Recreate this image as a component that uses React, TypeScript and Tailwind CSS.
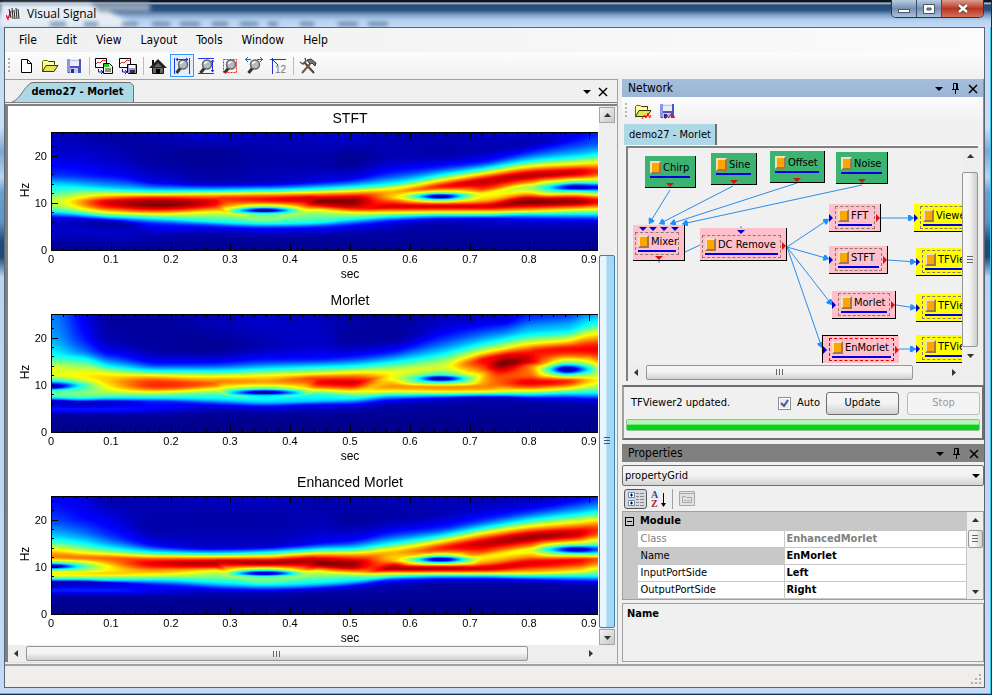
import { useLayoutEffect, useRef } from 'react';
import type { ReactNode } from 'react';

// One column of the time-frequency mesh: x in plot pixels, then matching lists of y and level.
type MeshColumn = [number, number[], number[]];

const PLOT_W = 547;
const PLOT_H = 118;

const clamp = (n: number) => Math.max(0, Math.min(1, n));

function jet(v: number): [number, number, number] {
  return [
    255 * clamp(1.5 - Math.abs(4 * v - 3)),
    255 * clamp(1.5 - Math.abs(4 * v - 2)),
    255 * clamp(1.5 - Math.abs(4 * v - 1)),
  ];
}

// Cubic interpolation with limited slopes, so that no overshoot appears between samples.
function sample(xs: number[], ys: number[], x: number) {
  const last = xs.length - 1;
  let i = 0;
  while (i < last - 1 && x > xs[i + 1]) i++;
  const secant = (k: number) => (ys[k + 1] - ys[k]) / (xs[k + 1] - xs[k]);
  const slope = (k: number) => {
    if (k === 0 || k === last) return 0;
    const a = secant(k - 1);
    const b = secant(k);
    return a * b <= 0 ? 0 : (2 * a * b) / (a + b);
  };
  const h = xs[i + 1] - xs[i];
  const t = clamp((x - xs[i]) / h);
  const t2 = t * t;
  const t3 = t2 * t;
  return (
    (2 * t3 - 3 * t2 + 1) * ys[i] +
    (t3 - 2 * t2 + t) * h * slope(i) +
    (3 * t2 - 2 * t3) * ys[i + 1] +
    (t3 - t2) * h * slope(i + 1)
  );
}

// Adds a column at the rim of an interference gap: outer rows follow the mesh, rows 6-8 are given.
type Rim = [number, number[], number[]];

function addRims(mesh: MeshColumn[], rims: Rim[]): MeshColumn[] {
  const xs = mesh.map((c) => c[0]);
  const extra = rims.map(([x, ry, rv]): MeshColumn => {
    const y = mesh[0][1].map((_, i) => sample(xs, mesh.map((c) => c[1][i]), x));
    const v = mesh[0][2].map((_, i) => sample(xs, mesh.map((c) => c[2][i]), x));
    y.splice(6, 3, ...ry);
    v.splice(6, 3, ...rv);
    for (let i = 9; i < y.length - 1; i++) y[i] = Math.max(y[i], y[i - 1] + 1);
    return [x, y, v];
  });
  return [...mesh, ...extra].sort((a, b) => a[0] - b[0]);
}

const stftMesh = addRims([
  [0, [0, 20, 42, 52, 60, 65, 68, 70, 73, 76, 78, 81, 85, 90, 97, 118], [0.06, 0.08, 0.17, 0.34, 0.45, 0.53, 0.56, 0.57, 0.54, 0.48, 0.42, 0.3, 0.13, 0.07, 0.07, 0.02]],
  [60, [0, 15, 40, 55, 62, 66, 69, 71, 74, 77, 80, 84, 88, 91, 99, 118], [0.03, 0.05, 0.11, 0.32, 0.62, 0.8, 0.91, 0.92, 0.87, 0.76, 0.62, 0.38, 0.12, 0.03, 0.07, 0.02]],
  [107, [0, 23, 48, 58, 62, 66, 69, 72, 75, 78, 81, 86, 92, 97, 103, 118], [0.05, 0.03, 0.09, 0.36, 0.63, 0.88, 0.97, 1, 0.94, 0.82, 0.65, 0.38, 0.15, 0.1, 0.05, 0.02]],
  [162, [0, 23, 49, 58, 61, 66, 69, 71, 74, 77, 80, 89, 94, 98, 105, 118], [0.08, 0.02, 0.05, 0.36, 0.6, 0.83, 0.9, 0.89, 0.84, 0.72, 0.6, 0.38, 0.15, 0.08, 0.03, 0.02]],
  [213, [0, 25, 49, 58, 61, 67, 74, 78, 81, 84, 87, 91, 96, 100, 106, 118], [0.06, 0.04, 0.06, 0.4, 0.65, 0.87, 0.5, 0.02, 0.4, 0.49, 0.5, 0.38, 0.14, 0.08, 0.03, 0.02]],
  [269, [0, 27, 47, 56, 60, 66, 69, 71, 74, 77, 80, 89, 95, 99, 105, 118], [0.07, 0.04, 0.09, 0.38, 0.65, 0.93, 1, 0.95, 0.83, 0.65, 0.54, 0.4, 0.14, 0.08, 0.03, 0.02]],
  [299, [0, 27, 45, 54, 59, 65, 68, 71, 74, 77, 80, 87, 93, 98, 105, 118], [0.08, 0.02, 0.1, 0.36, 0.64, 0.92, 0.99, 0.98, 0.92, 0.8, 0.62, 0.37, 0.14, 0.07, 0.03, 0.02]],
  [341, [0, 22, 38, 51, 56, 60, 63, 65, 69, 74, 79, 84, 89, 95, 104, 118], [0.05, 0.05, 0.13, 0.38, 0.62, 0.7, 0.68, 0.68, 0.8, 0.91, 0.68, 0.38, 0.14, 0.06, 0.03, 0.02]],
  [389, [0, 20, 33, 42, 48, 54, 60, 64, 68, 74, 79, 83, 87, 92, 102, 118], [0.05, 0.04, 0.13, 0.36, 0.63, 0.85, 0.5, 0.02, 0.5, 0.91, 0.66, 0.36, 0.11, 0.04, 0.03, 0.02]],
  [432, [0, 15, 28, 36, 41, 49, 56, 62, 67, 74, 79, 83, 87, 92, 102, 118], [0.07, 0.05, 0.13, 0.37, 0.63, 0.93, 0.82, 0.62, 0.68, 0.91, 0.66, 0.36, 0.09, 0.06, 0.03, 0.02]],
  [478, [0, 10, 18, 28, 34, 43, 50, 55, 60, 69, 78, 82, 87, 92, 102, 118], [0.08, 0.05, 0.13, 0.36, 0.63, 0.94, 0.73, 0.53, 0.65, 1, 0.67, 0.36, 0.13, 0.06, 0.03, 0.02]],
  [526, [0, 6, 12, 23, 31, 40, 49, 55, 59, 69, 77, 82, 87, 92, 102, 118], [0.1, 0.13, 0.18, 0.35, 0.62, 0.92, 0.5, 0.04, 0.45, 0.97, 0.63, 0.36, 0.14, 0.06, 0.03, 0.02]],
  [547, [0, 6, 12, 21, 30, 39, 49, 55, 59, 69, 77, 82, 87, 92, 102, 118], [0.15, 0.18, 0.22, 0.36, 0.62, 0.84, 0.5, 0.12, 0.4, 0.89, 0.6, 0.36, 0.15, 0.06, 0.03, 0.02]],
], [
  [183, [74, 78, 80], [0.66, 0.45, 0.47]],
  [243, [74, 78, 80], [0.66, 0.45, 0.47]],
  [362, [60, 64, 68], [0.64, 0.45, 0.64]],
  [416, [59, 63, 68], [0.66, 0.46, 0.64]],
  [494, [50, 55, 60], [0.6, 0.4, 0.55]],
]);

const morletMesh = addRims([
  [0, [0, 21, 40, 48, 55, 60, 66, 72, 76, 79, 81, 84, 87, 95, 101, 118], [0.25, 0.28, 0.38, 0.5, 0.6, 0.6, 0.4, 0.02, 0.4, 0.48, 0.45, 0.3, 0.05, 0.14, 0.03, 0.01]],
  [30, [0, 21, 36, 45, 54, 61, 66, 71, 75, 79, 82, 85, 88, 95, 101, 118], [0.12, 0.15, 0.24, 0.4, 0.56, 0.63, 0.55, 0.4, 0.45, 0.5, 0.46, 0.3, 0.06, 0.14, 0.03, 0.01]],
  [60, [0, 21, 38, 51, 59, 64, 67, 71, 74, 78, 81, 84, 88, 95, 101, 118], [0.03, 0.04, 0.12, 0.35, 0.6, 0.68, 0.69, 0.66, 0.62, 0.54, 0.46, 0.32, 0.07, 0.14, 0.03, 0.01]],
  [107, [0, 32, 48, 56, 61, 65, 68, 71, 74, 77, 80, 84, 88, 94, 101, 118], [0.03, 0.03, 0.13, 0.37, 0.62, 0.77, 0.83, 0.84, 0.78, 0.64, 0.5, 0.33, 0.14, 0.12, 0.03, 0.01]],
  [162, [0, 33, 47, 56, 62, 67, 69, 71, 73, 76, 79, 85, 90, 95, 102, 118], [0.06, 0.02, 0.12, 0.36, 0.62, 0.75, 0.78, 0.75, 0.68, 0.57, 0.47, 0.34, 0.14, 0.06, 0.02, 0.01]],
  [213, [0, 30, 44, 54, 61, 67, 74, 78, 81, 83, 85, 88, 92, 97, 103, 118], [0.08, 0.05, 0.13, 0.36, 0.62, 0.72, 0.45, 0.02, 0.33, 0.38, 0.37, 0.31, 0.13, 0.05, 0.02, 0.01]],
  [269, [0, 27, 43, 52, 59, 64, 68, 71, 74, 77, 80, 86, 90, 96, 103, 118], [0.06, 0.07, 0.13, 0.36, 0.62, 0.82, 0.88, 0.83, 0.7, 0.53, 0.42, 0.33, 0.14, 0.05, 0.02, 0.01]],
  [299, [0, 25, 41, 51, 58, 64, 68, 72, 75, 78, 81, 85, 90, 96, 103, 118], [0.04, 0.03, 0.13, 0.36, 0.62, 0.83, 0.91, 0.84, 0.71, 0.57, 0.45, 0.34, 0.13, 0.04, 0.02, 0.01]],
  [341, [0, 22, 36, 47, 55, 59, 61, 64, 68, 72, 76, 81, 86, 92, 103, 118], [0.03, 0.03, 0.13, 0.36, 0.56, 0.62, 0.62, 0.61, 0.68, 0.73, 0.64, 0.36, 0.12, 0.04, 0.02, 0.01]],
  [389, [0, 12, 23, 38, 47, 53, 60, 64, 68, 73, 77, 81, 85, 92, 102, 118], [0.06, 0.08, 0.15, 0.34, 0.52, 0.58, 0.42, 0.02, 0.42, 0.73, 0.63, 0.32, 0.08, 0.03, 0.02, 0.01]],
  [432, [0, 6, 15, 28, 38, 46, 54, 61, 67, 72, 77, 80, 84, 90, 102, 118], [0.07, 0.09, 0.17, 0.36, 0.63, 0.87, 0.8, 0.68, 0.7, 0.74, 0.63, 0.35, 0.06, 0.03, 0.02, 0.01]],
  [452, [0, 6, 13, 24, 34, 42, 49, 56, 62, 68, 76, 80, 84, 90, 102, 118], [0.07, 0.1, 0.18, 0.36, 0.63, 0.91, 1, 0.89, 0.8, 0.8, 0.63, 0.35, 0.06, 0.03, 0.02, 0.01]],
  [478, [0, 5, 11, 19, 29, 38, 46, 53, 60, 68, 76, 80, 85, 90, 102, 118], [0.16, 0.19, 0.26, 0.36, 0.62, 0.86, 0.92, 0.75, 0.77, 0.89, 0.62, 0.36, 0.08, 0.03, 0.02, 0.01]],
  [516, [0, 4, 9, 16, 26, 35, 48, 55, 61, 67, 74, 79, 85, 90, 102, 118], [0.18, 0.22, 0.28, 0.36, 0.63, 0.87, 0.5, 0.02, 0.48, 0.84, 0.62, 0.36, 0.1, 0.04, 0.02, 0.01]],
  [547, [0, 2, 4, 8, 19, 35, 49, 55, 60, 66, 72, 79, 86, 91, 102, 118], [0.3, 0.32, 0.34, 0.38, 0.62, 0.88, 0.66, 0.52, 0.57, 0.64, 0.55, 0.35, 0.1, 0.04, 0.02, 0.01]],
], [
  [181, [74, 78, 80], [0.54, 0.34, 0.37]],
  [246, [74, 78, 80], [0.58, 0.35, 0.37]],
  [362, [60, 64, 68], [0.53, 0.44, 0.52]],
  [416, [60, 64, 68], [0.58, 0.44, 0.54]],
  [494, [48, 55, 60], [0.72, 0.48, 0.6]],
  [537, [48, 55, 60], [0.58, 0.36, 0.5]],
]);

const enhancedMesh = addRims([
  [0, [0, 22, 36, 43, 53, 60, 66, 70, 73, 77, 80, 83, 86, 94, 100, 118], [0.12, 0.18, 0.29, 0.38, 0.62, 0.75, 0.45, 0.02, 0.42, 0.64, 0.56, 0.34, 0.05, 0.15, 0.03, 0.01]],
  [30, [0, 20, 34, 46, 56, 61, 66, 70, 73, 77, 80, 83, 86, 94, 100, 118], [0.1, 0.13, 0.22, 0.37, 0.62, 0.76, 0.56, 0.42, 0.5, 0.65, 0.55, 0.34, 0.06, 0.15, 0.03, 0.01]],
  [60, [0, 20, 38, 51, 58, 62, 66, 71, 73, 77, 80, 84, 87, 94, 100, 118], [0.04, 0.09, 0.16, 0.36, 0.64, 0.78, 0.73, 0.64, 0.64, 0.67, 0.55, 0.33, 0.08, 0.15, 0.03, 0.01]],
  [107, [0, 30, 48, 56, 60, 64, 67, 70, 73, 77, 80, 84, 89, 95, 101, 118], [0.05, 0.04, 0.11, 0.38, 0.65, 0.85, 0.91, 0.86, 0.75, 0.65, 0.53, 0.34, 0.14, 0.1, 0.03, 0.01]],
  [162, [0, 22, 50, 57, 60, 65, 67, 70, 73, 76, 80, 87, 92, 97, 103, 118], [0.06, 0.04, 0.07, 0.37, 0.62, 0.92, 0.95, 0.88, 0.68, 0.57, 0.5, 0.33, 0.14, 0.05, 0.02, 0.01]],
  [213, [0, 22, 49, 56, 60, 66, 73, 77, 80, 82, 85, 89, 94, 98, 105, 118], [0.07, 0.04, 0.07, 0.38, 0.65, 0.96, 0.5, 0.02, 0.42, 0.49, 0.47, 0.34, 0.12, 0.04, 0.02, 0.01]],
  [269, [0, 22, 45, 53, 57, 64, 67, 70, 74, 77, 80, 87, 92, 96, 103, 118], [0.04, 0.05, 0.11, 0.38, 0.65, 0.95, 1, 0.9, 0.66, 0.55, 0.49, 0.34, 0.12, 0.04, 0.02, 0.01]],
  [299, [0, 22, 43, 52, 57, 63, 67, 71, 74, 77, 80, 85, 90, 95, 103, 118], [0.05, 0.03, 0.12, 0.37, 0.65, 0.88, 0.98, 0.93, 0.78, 0.61, 0.47, 0.33, 0.12, 0.04, 0.02, 0.01]],
  [341, [0, 20, 34, 46, 53, 57, 61, 64, 68, 72, 76, 80, 84, 90, 103, 118], [0.05, 0.04, 0.12, 0.36, 0.63, 0.7, 0.68, 0.7, 0.86, 0.96, 0.7, 0.42, 0.15, 0.05, 0.02, 0.01]],
  [389, [0, 15, 30, 39, 45, 52, 59, 63, 67, 72, 76, 79, 83, 89, 103, 118], [0.06, 0.05, 0.14, 0.36, 0.63, 0.84, 0.5, 0.02, 0.52, 0.95, 0.69, 0.4, 0.12, 0.03, 0.02, 0.01]],
  [432, [0, 10, 22, 31, 37, 47, 55, 61, 66, 72, 76, 79, 83, 89, 103, 118], [0.05, 0.07, 0.15, 0.37, 0.64, 0.93, 0.8, 0.64, 0.72, 0.92, 0.69, 0.4, 0.11, 0.03, 0.02, 0.01]],
  [478, [0, 7, 14, 23, 30, 41, 49, 54, 59, 67, 76, 80, 84, 89, 103, 118], [0.06, 0.08, 0.15, 0.36, 0.63, 0.97, 0.76, 0.6, 0.7, 0.9, 0.65, 0.36, 0.11, 0.03, 0.02, 0.01]],
  [526, [0, 4, 9, 17, 26, 37, 48, 53, 58, 64, 74, 80, 85, 90, 103, 118], [0.1, 0.13, 0.2, 0.36, 0.64, 0.92, 0.5, 0.03, 0.5, 0.87, 0.65, 0.36, 0.12, 0.04, 0.02, 0.01]],
  [547, [0, 3, 8, 15, 24, 34, 47, 53, 58, 63, 73, 80, 85, 90, 103, 118], [0.14, 0.17, 0.24, 0.37, 0.64, 0.83, 0.5, 0.2, 0.48, 0.8, 0.58, 0.36, 0.14, 0.04, 0.02, 0.01]],
], [
  [181, [73, 77, 79], [0.64, 0.45, 0.48]],
  [246, [73, 77, 79], [0.68, 0.45, 0.48]],
  [362, [59, 63, 67], [0.66, 0.46, 0.64]],
  [418, [59, 63, 67], [0.68, 0.48, 0.64]],
  [494, [48, 53, 58], [0.64, 0.42, 0.6]],
]);

function Spectrogram({ mesh, label }: { mesh: MeshColumn[]; label: string }) {
  const ref = useRef<HTMLCanvasElement>(null);

  useLayoutEffect(() => {
    const ctx = ref.current?.getContext('2d');
    if (!ctx) return;
    const image = ctx.createImageData(PLOT_W, PLOT_H);
    const xs = mesh.map((c) => c[0]);
    const rows = mesh[0][1].map((_, i) => ({ y: mesh.map((c) => c[1][i]), v: mesh.map((c) => c[2][i]) }));
    for (let x = 0; x < PLOT_W; x++) {
      const ys = rows.map((r) => sample(xs, r.y, x));
      const vs = rows.map((r) => sample(xs, r.v, x));
      for (let y = 0; y < PLOT_H; y++) {
        const [r, g, b] = jet(sample(ys, vs, y));
        image.data.set([r, g, b, 255], (y * PLOT_W + x) * 4);
      }
    }
    ctx.putImageData(image, 0, 0);
  }, [mesh]);

  return <canvas ref={ref} width={PLOT_W} height={PLOT_H} aria-label={label} className="absolute left-[43px] top-[26px]" />;
}

const X0 = 43;
const Y0 = 144;

function Chart({ title, mesh }: { title: string; mesh: MeshColumn[] }) {
  const minorX = Array.from({ length: 46 }, (_, i) => i);
  const minorY = Array.from({ length: 13 }, (_, i) => i);
  return (
    <div className="relative h-[182px] w-[591px] shrink-0 bg-white">
      <Spectrogram mesh={mesh} label={title} />
      <svg width="591" height="182" className="absolute inset-0 font-['Liberation_Sans',sans-serif]" fontSize="11">
        <path d="M43.5 144V26.5H590M43 144.5H590" fill="none" stroke="#000" />
        {minorX.map((i) => {
          const x = Math.round(X0 + i * 11.96) + 0.5;
          const len = i % 5 === 0 ? 7 : 3;
          return <path key={i} d={`M${x} 26v${len}M${x} 144v-${len}`} stroke="#000" />;
        })}
        {minorY.map((i) => {
          const y = Math.round(Y0 - i * 9.44) + 0.5;
          return <path key={i} d={`M43 ${y}h${i % 5 === 0 ? 7 : 3}`} stroke="#000" />;
        })}
        <text x="342" y="17" fontSize="14" textAnchor="middle">{title}</text>
        {[0, 10, 20].map((hz) => (
          <text key={hz} x="39" y={148 - Math.round(hz * 4.72)} textAnchor="end">{hz}</text>
        ))}
        {[0, 1, 2, 3, 4, 5, 6, 7, 8, 9].map((n) => (
          <text key={n} x={Math.round(43 + n * 59.8)} y="157" textAnchor="middle">{n === 0 ? '0' : `0.${n}`}</text>
        ))}
        <text x="342" y="172" fontSize="12" textAnchor="middle">sec</text>
        <text transform="translate(21 84) rotate(-90)" fontSize="12" textAnchor="middle">Hz</text>
      </svg>
    </div>
  );
}

/* ---------- icons ---------- */

function Icon({ children, size = 18 }: { children: ReactNode; size?: number }) {
  return (
    <svg width={size} height={size} viewBox="0 0 18 18" fill="none" aria-hidden="true">
      {children}
    </svg>
  );
}

const NewIcon = () => (
  <Icon>
    <path d="M4.500 2.500h6l4 4v9h-10z" fill="#fff" stroke="#000" />
    <path d="M10.500 2.500v4h4" stroke="#000" />
  </Icon>
);

const OpenIcon = ({ marked = false }: { marked?: boolean }) => (
  <Icon>
    <path d="M1.500 14.500v-10l1-1h4l1 1h6v3" fill="#ffffa0" stroke="#6b6b00" />
    <path d="M1.500 14.500l3.500-6h12l-4 6z" fill="#e4e45c" stroke="#3a3a00" />
    <path d="M7.500 4.500h6v3" stroke="#3a3a00" />
    {marked && <path d="M8 17l2.500-4 1.500 3 2-5 1.500 5 1.500-3" stroke="#f00" />}
  </Icon>
);

const SaveIcon = ({ marked = false }: { marked?: boolean }) => (
  <Icon>
    <path d="M2 2h14v14H3l-1-1z" fill="#4a55bd" />
    <path d="M2 2h3v13H2z" fill="#8b96e6" />
    <path d="M5 2h9v7H5z" fill="#e9edf8" />
    <path d="M5 3h9v1H5z" fill="#b9c4e2" />
    <path d="M5 11h8v5H5z" fill="#c3cbe6" />
    <path d="M6 12h3v4H6z" fill="#26307e" />
    {marked && <path d="M7 17l2-4 1.500 3 2-4 1.500 4 1-3 2 3" stroke="#c01840" />}
  </Icon>
);

const GraphMini = () => (
  <>
    <path d="M.5 1.500h11v9H.5z" fill="#fff" stroke="#000" />
    <path d="M1 7l2-2 2 1 3-3 3 1" stroke="#e02020" />
    <path d="M3.500 12v3h4M6 13l2 2-2 2" stroke="#1414b8" />
  </>
);

const GraphSheetIcon = () => (
  <Icon>
    <GraphMini />
    <path d="M8.500 6.500h6l3 3v7h-9z" fill="#e8f4e0" stroke="#000" />
    <path d="M9 7h5v3H9z" fill="#22cc22" />
    <path d="M10 12h6M10 14h6" stroke="#333" />
  </Icon>
);

const GraphSaveIcon = () => (
  <Icon>
    <GraphMini />
    <path d="M8.500 7.500h9v9h-8l-1-1z" fill="#9a9fd8" stroke="#000" />
    <path d="M10 8h6v3h-6z" fill="#fff" />
    <path d="M11 13h5v3h-5z" fill="#333" />
  </Icon>
);

const HomeIcon = () => (
  <Icon>
    <path d="M3 3h2v5H3z" fill="#111" />
    <path d="M3.500 9.500h11v7h-11z" fill="#666" stroke="#111" />
    <path d="M0 11L9 2l9 9z" fill="#222" />
    <path d="M5 10l4-4 4 4z" fill="#666" />
    <path d="M7 12h4v5H7z" fill="#000" />
  </Icon>
);

const Magnifier = () => (
  <>
    <path d="M7.500 11l-4 5" stroke="#333" strokeWidth="3" />
    <circle cx="10" cy="7.500" r="4.500" fill="#b4bcc2" stroke="#666" strokeWidth="1.500" />
    <path d="M7.500 7a2.500 2.500 0 0 1 3-2" stroke="#fff" strokeWidth="1.500" />
  </>
);

const ZoomXIcon = () => (
  <Icon>
    <Magnifier />
    <path d="M1.500 1v16M16.500 1v16M3 2.500h12M5 1L3 2.500 5 4M13 1l2 1.500L13 4" stroke="#1f36e8" />
  </Icon>
);

const ZoomYIcon = () => (
  <Icon>
    <Magnifier />
    <path d="M1 1.500h16M1 16.500h16M15.500 3v12M14 5l1.500-2L17 5M14 13l1.500 2 1.500-2" stroke="#1f36e8" />
  </Icon>
);

const ZoomBoxIcon = () => (
  <Icon>
    <Magnifier />
    <path d="M2.500 2.500h13v13h-13z" stroke="#f02020" strokeDasharray="2 1" />
  </Icon>
);

const PanIcon = () => (
  <Icon>
    <Magnifier />
    <path d="M0 2.500h6M12 2.500h6M3 0L.5 2.500 3 5M15 0l2.500 2.500L15 5" stroke="#1f56e8" />
  </Icon>
);

const AxisIcon = () => (
  <Icon>
    <path d="M1 2.500h16M3.500 1v16M4 3l5 5" stroke="#2030d8" />
    <text x="6" y="16" fontSize="10" fill="#777" className="font-['Liberation_Sans',sans-serif]">12</text>
  </Icon>
);

const ToolsIcon = () => (
  <Icon>
    <path d="M5 5l10 11" stroke="#444" strokeWidth="2" />
    <path d="M1 5l3 2 3-3-1-3" stroke="#555" strokeWidth="1.500" />
    <path d="M3 16l8-9" stroke="#7b5a28" strokeWidth="2" />
    <path d="M8 3l4-1 5 4-1 3-3-3-2 1z" fill="#777" stroke="#333" />
  </Icon>
);

const PinIcon = () => (
  <svg width="9" height="11" fill="none" stroke="#000" aria-hidden="true">
    <path d="M2.500 6V.5h4V6M5.500 1v5M1 6.500h7M4.500 7v4" />
  </svg>
);

const CrossIcon = () => (
  <svg width="10" height="10" fill="none" stroke="#000" strokeWidth="1.500" aria-hidden="true">
    <path d="M1 1l8 8M9 1L1 9" />
  </svg>
);

const CaretIcon = () => (
  <svg width="8" height="4" aria-hidden="true">
    <path d="M0 0h8L4 4z" />
  </svg>
);

/* ---------- window chrome ---------- */

function TitleBar() {
  return (
    <header className="relative flex h-[27px] shrink-0 justify-between overflow-hidden bg-[linear-gradient(180deg,#0b1420_0,#0b1420_2px,#c5d6e6_3px,#264a76_5px,#2c5280_10px,#7fa1c9_15px,#b4d0ef_20px,#c3dbf6_27px)]">
      <svg width="420" height="27" className="absolute left-0 top-0 blur-[2px]" aria-hidden="true">
        <path d="M0 3h90l50 24H0z" fill="#e6edf4" />
        <path d="M90 3h60v9H100z" fill="#8fa3b8" />
        <path d="M50 24h16M84 24h14M122 24h16M152 24h18M180 24h20M212 24h16M240 24h18M268 24h10M300 24h14M338 24h20M368 24h20" stroke="#4b6d96" strokeWidth="3" />
      </svg>
      <div className="relative flex items-center gap-[7px] pl-[6px] font-['Open_Sans',sans-serif] text-[12px]">
        <svg width="14" height="14" fill="none" aria-hidden="true">
          <path d="M0 8l2 4 3-8" stroke="#e01830" strokeWidth="1.500" />
          <path d="M3 2l2 9M6 1l1 11M8 3l1 9M10 1l1 11M12 2l1 10" stroke="#222" />
        </svg>
        <span>Visual Signal</span>
      </div>
      <div className="relative mr-[7px] flex h-[18px] overflow-hidden rounded-b-[5px] border border-t-0 border-[#26384f]">
        <button aria-label="Minimize" className="flex w-[25px] items-end justify-center border-r border-[#3b4f69] bg-linear-to-b from-[#b9cde2] via-[#7590af] to-[#a9c2dd] pb-[4px]">
          <span className="h-[4px] w-[12px] border border-[#4a5668] bg-white" />
        </button>
        <button aria-label="Maximize" className="flex w-[25px] items-center justify-center border-r border-[#3b4f69] bg-linear-to-b from-[#b9cde2] via-[#7590af] to-[#a9c2dd]">
          <svg width="12" height="10" fill="none" aria-hidden="true">
            <path d="M2.500 2.500h7v5h-7z" stroke="#fff" strokeWidth="3" />
            <path d="M.5.5h11v9H.5zM4 4h4v2H4z" stroke="#4a5668" />
          </svg>
        </button>
        <button aria-label="Close" className="flex w-[41px] items-center justify-center bg-linear-to-b from-[#dc9c90] via-[#b83420] to-[#d4705c]">
          <svg width="12" height="11" fill="none" aria-hidden="true">
            <path d="M2 2l8 7M10 2L2 9" stroke="#5b2a28" strokeWidth="4" />
            <path d="M2 2l8 7M10 2L2 9" stroke="#fff" strokeWidth="2.500" />
          </svg>
        </button>
      </div>
    </header>
  );
}

const menus = ['File', 'Edit', 'View', 'Layout', 'Tools', 'Window', 'Help'];

function MenuBar() {
  return (
    <nav className="flex h-[24px] shrink-0 items-center bg-linear-to-r from-[#f0f0f0] to-[#fbfbfb] pl-[4px]">
      {menus.map((name) => (
        <button key={name} className="pl-[10px] pr-[9px] text-[12px] leading-[20px]">{name}</button>
      ))}
    </nav>
  );
}

const Grip = () => <span className="h-[16px] w-[2px] shrink-0 bg-[repeating-linear-gradient(180deg,#b4b4b4_0,#b4b4b4_2px,transparent_2px,transparent_4px)]" />;
const Separator = () => <span className="ml-[3px] mr-[2px] h-[18px] w-px shrink-0 bg-[#bdbdbd]" />;

function ToolButton({ label, active = false, children }: { label: string; active?: boolean; children: ReactNode }) {
  return (
    <button
      aria-label={label}
      className={`flex h-[23px] w-[24px] shrink-0 items-center justify-center border ${active ? 'border-[#3399ff] bg-[#e4eefa]' : 'border-transparent'}`}
    >
      {children}
    </button>
  );
}

function Toolbar() {
  return (
    <div className="flex h-[27px] shrink-0 items-center bg-linear-to-b from-[#fdfdfd] to-[#f0f0f0] pl-[3px]">
      <Grip />
      <span className="w-[4px]" />
      <ToolButton label="New"><NewIcon /></ToolButton>
      <ToolButton label="Open"><OpenIcon /></ToolButton>
      <ToolButton label="Save"><SaveIcon /></ToolButton>
      <Separator />
      <ToolButton label="Copy chart"><GraphSheetIcon /></ToolButton>
      <ToolButton label="Save chart"><GraphSaveIcon /></ToolButton>
      <Separator />
      <ToolButton label="Home"><HomeIcon /></ToolButton>
      <ToolButton label="Zoom X" active><ZoomXIcon /></ToolButton>
      <ToolButton label="Zoom Y"><ZoomYIcon /></ToolButton>
      <ToolButton label="Zoom box"><ZoomBoxIcon /></ToolButton>
      <ToolButton label="Pan"><PanIcon /></ToolButton>
      <ToolButton label="Axis values"><AxisIcon /></ToolButton>
      <Separator />
      <ToolButton label="Preferences"><ToolsIcon /></ToolButton>
    </div>
  );
}

/* ---------- scroll bars ---------- */

const arrowPaths = {
  up: 'M0 5h7L3.500 1z',
  down: 'M0 2h7L3.500 6z',
  left: 'M5 0v7L1 3.500z',
  right: 'M2 0v7l4-3.500z',
};

function ArrowButton({ dir, framed = false }: { dir: keyof typeof arrowPaths; framed?: boolean }) {
  return (
    <button
      aria-label={`Scroll ${dir}`}
      className={`flex size-[16px] shrink-0 items-center justify-center ${framed ? 'border border-[#a5a5a5] bg-linear-to-br from-[#f4f4f4] to-[#c9c9c9]' : ''}`}
    >
      <svg width="7" height="7" fill="#333"><path d={arrowPaths[dir]} /></svg>
    </button>
  );
}

const Ridges = ({ vertical = false, color = '#666' }: { vertical?: boolean; color?: string }) => (
  <svg width="8" height="8" stroke={color} aria-hidden="true">
    <path d={vertical ? 'M.5 1v6M3.500 1v6M6.500 1v6' : 'M1 .5h6M1 3.500h6M1 6.500h6'} />
  </svg>
);

/* ---------- left pane ---------- */

function DocumentPane() {
  return (
    <section className="flex min-w-0 flex-1 flex-col border-r border-t border-[#a0a0a0] bg-[#f0f0f0]">
      <div className="flex h-[23px] shrink-0 items-end justify-between border-b border-[#808080]">
        <div className="relative ml-[7px] h-[20px]">
          <svg width="122" height="20" className="absolute inset-0" aria-hidden="true">
            <path d="M0 20C8 18 12 4 20 .5H118l3.500 3V20" fill="#add8e6" stroke="#707070" />
          </svg>
          <button className="relative block h-[19px] w-[122px] pl-[9px] text-[11px] font-bold leading-[19px]">demo27 - Morlet</button>
        </div>
        <div className="flex items-center gap-[7px] self-center pr-[9px] pt-px">
          <button aria-label="Documents"><CaretIcon /></button>
          <button aria-label="Close document"><CrossIcon /></button>
        </div>
      </div>
      <div className="mt-px flex min-h-0 flex-1 flex-col border-l-3 border-t-2 border-[#808080] bg-[#f0f0f0] pr-[2px]">
        <div className="flex min-h-0 flex-1">
          <div className="min-w-0 flex-1 overflow-hidden bg-white">
            <Chart title="STFT" mesh={stftMesh} />
            <Chart title="Morlet" mesh={morletMesh} />
            <Chart title="Enhanced Morlet" mesh={enhancedMesh} />
          </div>
          <div className="flex w-[16px] flex-col bg-[#eee] pt-px">
            <ArrowButton dir="up" framed />
            <div className="min-h-0 flex-[132]" />
            <div className="flex min-h-0 flex-[372] items-center justify-center rounded-[2px] border border-[#3c7fb1] bg-linear-to-r from-[#e8f6fd] from-40% to-[#a6d8f4] to-50%">
              <Ridges color="#2b5f8a" />
            </div>
            <div className="h-px" />
            <ArrowButton dir="down" framed />
          </div>
        </div>
        <div className="flex h-[17px] shrink-0 items-center bg-[#eee] pr-[17px]">
          <ArrowButton dir="left" />
          <div className="ml-[2px] flex h-[15px] flex-[500] items-center justify-center rounded-[2px] border border-[#979797] bg-linear-to-b from-[#f5f5f5] from-45% to-[#cfcfcf]">
            <Ridges vertical />
          </div>
          <div className="flex-[54]" />
          <ArrowButton dir="right" />
        </div>
      </div>
      <div className="h-[2px] shrink-0 border-t border-[#e0e0e0]" />
    </section>
  );
}

/* ---------- network ---------- */

type NetworkNode = {
  name: string;
  place: string;
  kind: 'source' | 'wide' | 'step' | 'viewer';
  top?: string[];
  bottom?: string;
  left?: boolean;
  right?: boolean;
  selected?: boolean;
};

const nodes: NetworkNode[] = [
  { name: 'Chirp', place: 'left-[17px] top-[8px] w-[51px] h-[32px]', kind: 'source', bottom: 'left-[21px]' },
  { name: 'Sine', place: 'left-[83px] top-[5px] w-[46px] h-[32px]', kind: 'source', bottom: 'left-[19px]' },
  { name: 'Offset', place: 'left-[142px] top-[3px] w-[55px] h-[32px]', kind: 'source', bottom: 'left-[23px]' },
  { name: 'Noise', place: 'left-[208px] top-[4px] w-[52px] h-[32px]', kind: 'source', bottom: 'left-[22px]' },
  { name: 'Mixer', place: 'left-[5px] top-[77px] w-[52px] h-[36px]', kind: 'wide', top: ['left-[6px]', 'left-[16px]', 'left-[27px]', 'left-[38px]'], bottom: 'left-[22px]' },
  { name: 'DC Remove', place: 'left-[72px] top-[80px] w-[87px] h-[33px]', kind: 'wide', top: ['left-[37px]'], right: true },
  { name: 'FFT', place: 'left-[201px] top-[56px] w-[52px] h-[28px]', kind: 'step', left: true, right: true },
  { name: 'STFT', place: 'left-[201px] top-[98px] w-[59px] h-[28px]', kind: 'step', left: true, right: true },
  { name: 'Morlet', place: 'left-[204px] top-[143px] w-[64px] h-[28px]', kind: 'step', left: true, right: true },
  { name: 'EnMorlet', place: 'left-[195px] top-[188px] w-[76px] h-[28px]', kind: 'step', left: true, right: true, selected: true },
  { name: 'Viewer', place: 'left-[286px] top-[56px] w-[64px] h-[28px]', kind: 'viewer', left: true },
  { name: 'TFViewer', place: 'left-[288px] top-[100px] w-[76px] h-[28px]', kind: 'viewer', left: true },
  { name: 'TFViewer1', place: 'left-[288px] top-[146px] w-[82px] h-[28px]', kind: 'viewer', left: true },
  { name: 'TFViewer2', place: 'left-[288px] top-[187px] w-[82px] h-[28px]', kind: 'viewer', left: true },
];

const kindStyles = {
  source: 'bg-[#3cb371] px-[2px] pt-[2px]',
  wide: 'bg-[#ffc0cb] pl-[2px] pr-[5px] pt-[7px]',
  step: 'bg-[#ffc0cb] pl-[6px] pr-[5px] pt-[2px]',
  viewer: 'bg-[#ffff00] pl-[6px] pr-[5px] pt-[2px]',
};

function NodeBox({ node }: { node: NetworkNode }) {
  const dash = node.selected ? 'border-dashed border-[#e00000]' : node.kind === 'source' ? 'border-transparent' : 'border-dashed border-[#8a7a70]';
  const frame = node.selected ? 'shadow-[-1px_-1px_0_#000]' : 'border-b border-r border-black';
  return (
    <div className={`absolute ${frame} ${node.place} ${kindStyles[node.kind]}`}>
      <div className={`h-[23px] border px-[2px] pt-[2px] ${dash}`}>
        <div className="flex h-[17px] gap-[2px] border-b-2 border-[#0000e0]">
          <span className="h-[13px] w-[11px] shrink-0 border-2 border-b-[#a07850] border-l-[#f0e0c0] border-r-[#a07850] border-t-[#f0e0c0] bg-[#ffa500]" />
          <span className="whitespace-nowrap text-[11px] leading-[14px]">{node.name}</span>
        </div>
      </div>
      {node.top?.map((x) => (
        <svg key={x} width="8" height="4" className={`absolute top-[2px] ${x}`}><path d="M0 0h8L4 4z" fill="#0000d0" /></svg>
      ))}
      {node.bottom && (
        <svg width="8" height="4" className={`absolute bottom-0 ${node.bottom}`}><path d="M0 0h8L4 4z" fill="#d81010" /></svg>
      )}
      {node.left && (
        <svg width="4" height="8" className="absolute left-0 top-[10px]"><path d="M0 0v8l4-4z" fill="#0000d0" /></svg>
      )}
      {node.right && (
        <svg width="4" height="8" className={`absolute right-0 ${node.kind === 'wide' ? 'top-[14px]' : 'top-[10px]'}`}><path d="M0 0v8l4-4z" fill="#e01010" /></svg>
      )}
    </div>
  );
}

const edges = [
  'M42 42L21 76', 'M105 38L31 76', 'M169 35L42 76', 'M234 37L54 76', 'M159 99L201 71', 'M159 99L201 111',
  'M159 99L204 157', 'M159 99L194 200', 'M253 70H286', 'M260 112L288 114', 'M268 157L288 160', 'M271 201H288',
];

function NetworkCanvas() {
  return (
    <div className="relative min-h-0 min-w-0 flex-1 overflow-hidden bg-[#f0f0f0]">
      <svg className="absolute inset-0 size-full" aria-hidden="true">
        <defs>
          <marker id="head" markerWidth="7" markerHeight="7" refX="6" refY="3" orient="auto" markerUnits="userSpaceOnUse">
            <path d="M0 0h2l4 3-4 3H0z" fill="#1e90ff" />
          </marker>
        </defs>
        {edges.map((d) => (
          <path key={d} d={d} stroke="#2a8cec" fill="none" markerEnd="url(#head)" />
        ))}
        <path d="M57 104L72 97M31 113v2M113 78v2" stroke="#2a8cec" />
      </svg>
      {nodes.map((node) => <NodeBox key={node.name} node={node} />)}
    </div>
  );
}

function PaneHeader({ title, tone }: { title: string; tone: string }) {
  return (
    <div className={`flex h-[18px] shrink-0 items-center justify-between pl-[6px] pr-[5px] ${tone}`}>
      <h2 className="text-[12px] leading-[18px]">{title}</h2>
      <div className="flex items-center gap-[8px] pt-px">
        <button aria-label={`${title} menu`}><CaretIcon /></button>
        <button aria-label={`Pin ${title}`}><PinIcon /></button>
        <button aria-label={`Close ${title}`}><CrossIcon /></button>
      </div>
    </div>
  );
}

function NetworkPane() {
  return (
    <section className="flex min-h-0 flex-1 flex-col border-r border-[#909090]">
      <PaneHeader title="Network" tone="bg-linear-to-b from-[#a6bedb] to-[#9ab5d5]" />
      <div className="flex h-[27px] shrink-0 items-center bg-linear-to-b from-[#fcfcfc] to-[#f0f0f0] pl-[3px]">
        <Grip />
        <span className="w-[4px]" />
        <ToolButton label="Open network"><OpenIcon marked /></ToolButton>
        <ToolButton label="Save network"><SaveIcon marked /></ToolButton>
      </div>
      <div className="flex h-[22px] shrink-0 border-b border-white pl-[2px]">
        <button className="h-[21px] border-r-2 border-[#707070] bg-[#add8e6] pl-[5px] pr-[4px] text-[11px] leading-[19px]">demo27 - Morlet</button>
      </div>
      <div className="ml-[4px] mr-[5px] flex min-h-0 flex-1 flex-col border-l-2 border-t-2 border-[#808080]">
        <div className="flex min-h-0 flex-1">
          <NetworkCanvas />
          <div className="flex w-[16px] flex-col bg-[#eee]">
            <ArrowButton dir="up" />
            <div className="h-[8px]" />
            <div className="flex flex-1 items-center justify-center rounded-[2px] border border-[#979797] bg-linear-to-r from-[#f5f5f5] from-45% to-[#cfcfcf]">
              <Ridges />
            </div>
            <ArrowButton dir="down" />
          </div>
        </div>
        <div className="flex h-[18px] shrink-0 items-center bg-[#eee] pr-[17px]">
          <ArrowButton dir="left" />
          <div className="ml-[2px] flex h-[15px] flex-[267] items-center justify-center rounded-[2px] border border-[#979797] bg-linear-to-b from-[#f5f5f5] from-45% to-[#cfcfcf]">
            <Ridges vertical />
          </div>
          <div className="flex-[32]" />
          <ArrowButton dir="right" />
        </div>
      </div>
      <div className="h-[4px] shrink-0" />
    </section>
  );
}

function UpdatePane() {
  return (
    <section className="h-[55px] shrink-0 border-2 border-[#6e6e6e] border-l-[#a0a0a0] px-[2px] pt-[4px]">
      <div className="flex h-[25px] items-center">
        <span className="flex-1 pl-[5px] text-[11px]">TFViewer2 updated.</span>
        <label className="mr-[6px] flex items-center gap-[6px] text-[11px]">
          <input type="checkbox" defaultChecked className="peer sr-only" />
          <span className="flex size-[13px] items-center justify-center border border-[#8e8f8f] bg-[#e8ecf0] shadow-[inset_0_0_0_1px_#fff]">
            <svg width="9" height="9" fill="none" stroke="#3b5a98" strokeWidth="2" aria-hidden="true"><path d="M1 4l3 3 4-6" /></svg>
          </span>
          Auto
        </label>
        <button className="mr-[8px] h-[23px] w-[73px] rounded-[3px] border border-[#707070] bg-linear-to-b from-[#f4f4f4] from-45% to-[#d2d2d2] text-[11px]">Update</button>
        <button disabled className="h-[23px] w-[73px] rounded-[3px] border border-[#b8bdc2] bg-[#f4f4f4] text-[11px] text-[#9a9a9a]">Stop</button>
      </div>
      <div role="progressbar" aria-label="Update progress" aria-valuenow={100} className="mt-[3px] h-[12px] rounded-[2px] border border-[#8fbf8f] bg-linear-to-b from-[#b6f3b8] from-35% to-[#06d41c] to-55%" />
    </section>
  );
}

/* ---------- properties ---------- */

const properties = [
  { name: 'Class', value: 'EnhancedMorlet' },
  { name: 'Name', value: 'EnMorlet' },
  { name: 'InputPortSide', value: 'Left' },
  { name: 'OutputPortSide', value: 'Right' },
];

function PropertyTable() {
  return (
    <div className="flex h-[89px] shrink-0 border border-[#a0a0a0]">
      <div className="min-w-0 flex-1 overflow-hidden bg-[#c8c8c8]">
        <table className="w-full table-fixed border-collapse text-[11px] leading-[16px]">
          <colgroup>
            <col className="w-[14px]" />
            <col className="w-[147px]" />
            <col />
          </colgroup>
          <thead>
            <tr className="h-[18px]">
              <th className="p-0">
                <button aria-label="Collapse Module" className="ml-[2px] flex size-[9px] items-center justify-center border border-black">
                  <span className="h-px w-[5px] bg-black" />
                </button>
              </th>
              <th colSpan={2} className="p-0 pl-[3px] text-left font-bold">Module</th>
            </tr>
          </thead>
          <tbody>
            {properties.map(({ name, value }) => (
              <tr key={name} className="h-[17px]">
                <td className="p-0" />
                <td className={`border border-[#c8c8c8] p-0 pl-[3px] ${name === 'Name' ? 'bg-[#c8c8c8]' : 'bg-white'} ${name === 'Class' ? 'text-[#808080]' : ''}`}>{name}</td>
                <td className={`border border-[#c8c8c8] bg-white p-0 pl-[2px] font-bold ${name === 'Class' ? 'text-[#808080]' : ''}`}>{value}</td>
              </tr>
            ))}
            <tr className="h-[17px]">
              <td className="p-0" />
              <td className="border border-[#c8c8c8] bg-white p-0" />
              <td className="border border-[#c8c8c8] bg-white p-0" />
            </tr>
          </tbody>
        </table>
      </div>
      <div className="flex w-[16px] flex-col items-center bg-[#eee]">
        <ArrowButton dir="up" />
        <div className="mt-[2px] flex h-[18px] w-[15px] items-center justify-center rounded-[2px] border border-[#979797] bg-linear-to-r from-[#f5f5f5] from-45% to-[#cfcfcf]">
          <Ridges />
        </div>
        <div className="flex-1" />
        <ArrowButton dir="down" />
      </div>
    </div>
  );
}

function PropertiesPane() {
  return (
    <section className="flex shrink-0 flex-col pt-[4px]">
      <PaneHeader title="Properties" tone="bg-[#808080]" />
      <div className="relative mt-[3px]">
        <select
          aria-label="Object"
          className="block h-[21px] w-full appearance-none rounded-[2px] border border-[#707070] bg-linear-to-b from-[#f4f4f4] from-45% to-[#d4d4d4] pl-[2px] pt-px text-[11px]"
        >
          <option>propertyGrid</option>
        </select>
        <svg width="8" height="4" className="pointer-events-none absolute right-[4px] top-[9px]" aria-hidden="true"><path d="M0 0h8L4 4z" /></svg>
      </div>
      <div className="flex h-[25px] items-center gap-[2px] pl-[2px]">
        <button aria-label="Categorized" aria-pressed="true" className="flex h-[20px] w-[23px] items-center justify-center rounded-[3px] border border-[#555] bg-[#d6dade]">
          <svg width="18" height="16" fill="none" aria-hidden="true">
            <path d="M1.500 1.500h6v5h-6zM1.500 9.500h6v5h-6z" fill="#fff" stroke="#6a8cc0" />
            <path d="M3 4h3M4.500 2.500v3M3 12h3M4.500 10.500v3" stroke="#000" />
            <path d="M9 2.500h3M13 2.500h4M9 5.500h3M13 5.500h4M9 8.500h3M13 8.500h4M9 11.500h3M13 11.500h4M9 14.500h3M13 14.500h4" stroke="#8a8a8a" />
          </svg>
        </button>
        <button aria-label="Alphabetical" className="flex h-[20px] w-[19px] items-center justify-center">
          <svg width="16" height="18" aria-hidden="true" className="font-['Liberation_Serif',serif]" fontSize="10" fontWeight="bold">
            <text x="0" y="8" fill="#2c4fa8">A</text>
            <text x="0" y="17" fill="#a02828">Z</text>
            <path d="M12 3h1v10h2L12.500 17 10 13h2z" />
          </svg>
        </button>
        <span className="ml-[2px] mr-[4px] h-[20px] w-px bg-[#a0a0a0]" />
        <button aria-label="Property pages" disabled>
          <svg width="16" height="15" fill="none" stroke="#a8a8a8" aria-hidden="true">
            <path d="M.5.5h15v14H.5z" fill="#e2e2e2" />
            <path d="M1 2.500h14M3.500 5.500h3l1 1h5v5h-9zM5 9.500h2M8 9.500h3" />
          </svg>
        </button>
      </div>
      <PropertyTable />
      <div className="mt-[3px] h-[59px] border border-[#a0a0a0] px-[4px] pt-[1px] text-[11px] font-bold leading-[18px]">Name</div>
    </section>
  );
}

function StatusBar() {
  return (
    <footer className="flex h-[23px] shrink-0 items-end justify-end border-t-2 border-[#a0a0a0] bg-[#f0edeb] p-[2px]">
      <svg width="12" height="12" fill="#b0aeac" aria-hidden="true">
        <path d="M9 1h2v2H9zM9 5h2v2H9zM5 5h2v2H5zM9 9h2v2H9zM5 9h2v2H5zM1 9h2v2H1z" />
      </svg>
    </footer>
  );
}

export default function App() {
  return (
    <div className="flex h-screen flex-col overflow-hidden border-b border-r border-[#12304a] bg-[#c3dbf6] font-['DejaVu_Sans_Condensed','DejaVu_Sans',sans-serif] text-black">
      <TitleBar />
      <div className="flex min-h-0 flex-1 border-b border-r border-[#35c8ee] bg-[linear-gradient(180deg,#c3dbf6_0,#c9dff5_100px,#7ba7d4_125px,#b9d5f0_150px,#6c9fd0_165px,#5d93c8_195px,#1f4a78_215px,#1f4a78_230px,#b9d5f0_250px,#c3dbf6_100%)] pb-[5px] pl-[4px] pr-[5px]">
        <div className="flex min-w-0 flex-1 flex-col border border-[#5a6573] bg-[#f0f0f0]">
          <MenuBar />
          <Toolbar />
          <main className="flex min-h-0 flex-1">
            <DocumentPane />
            <div className="ml-[4px] flex w-[362px] shrink-0 flex-col pb-[2px]">
              <NetworkPane />
              <UpdatePane />
              <PropertiesPane />
            </div>
          </main>
          <StatusBar />
        </div>
      </div>
    </div>
  );
}
